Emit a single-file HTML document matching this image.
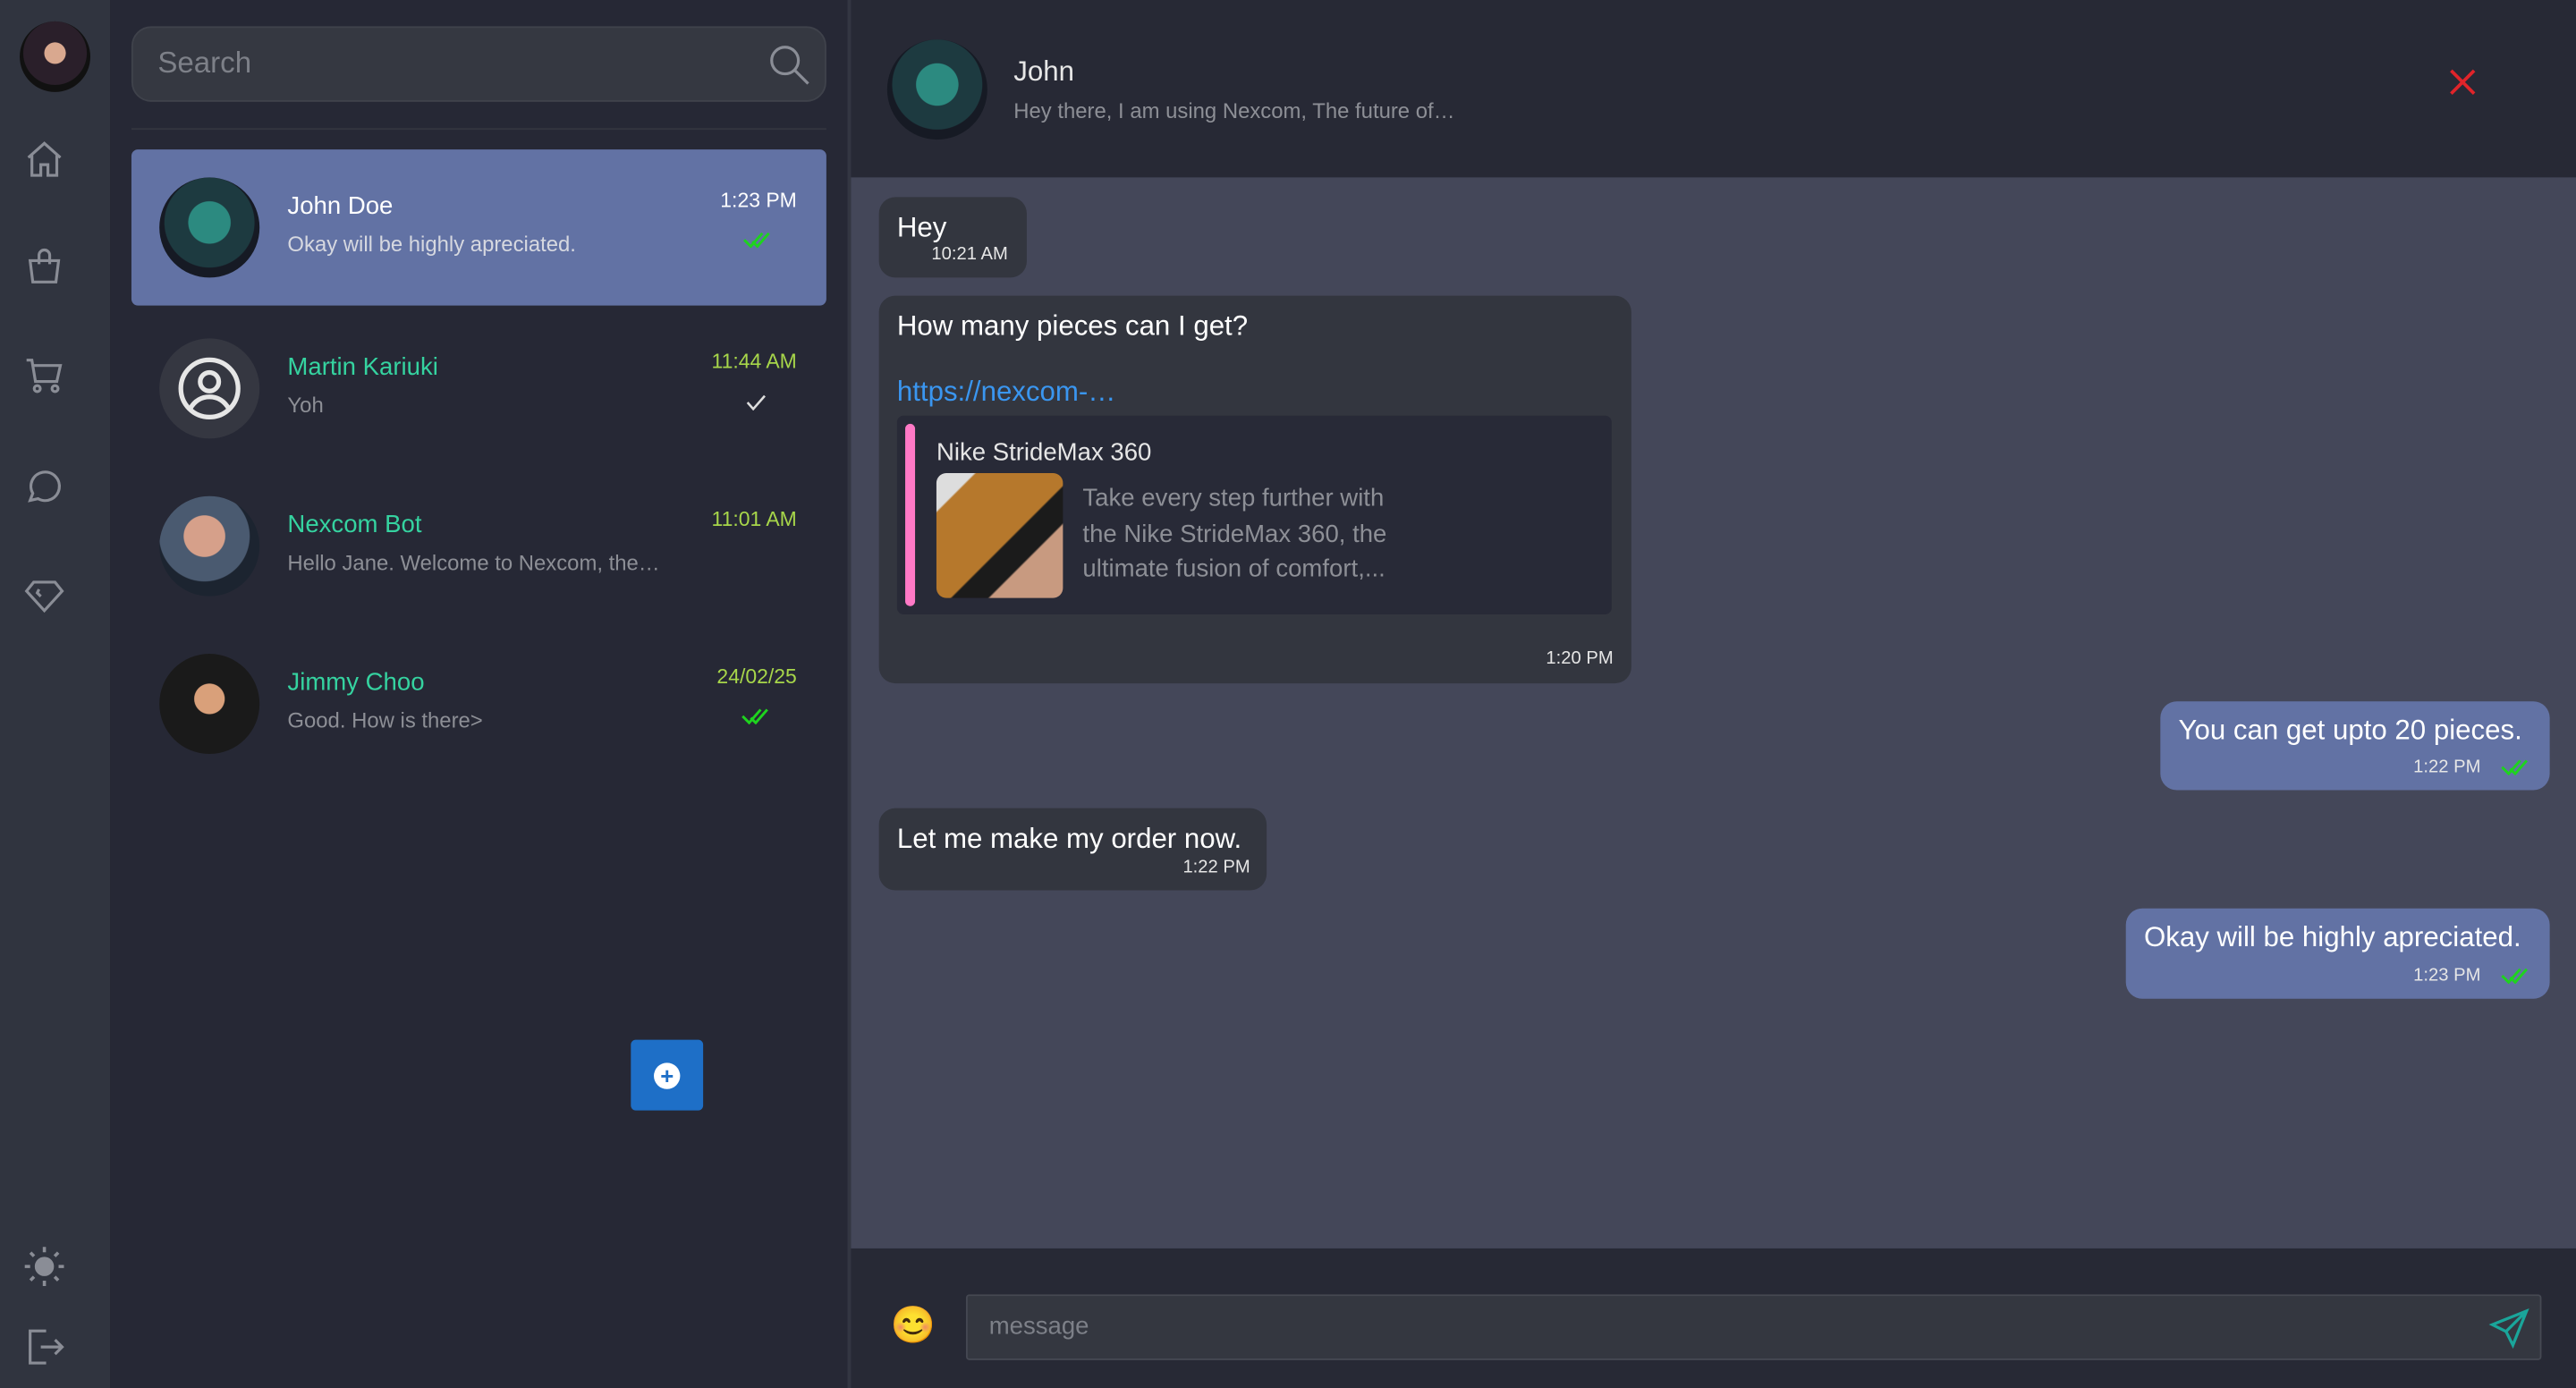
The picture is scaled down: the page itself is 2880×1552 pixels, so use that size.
<!DOCTYPE html>
<html><head><meta charset="utf-8"><style>
*{box-sizing:border-box;margin:0;padding:0}
html,body{width:2880px;height:1552px;overflow:hidden;background:#262835;font-family:"Liberation Sans",sans-serif}
#w{width:1568px;height:845px;transform:scale(1.836735);transform-origin:0 0;position:relative}
.abs{position:absolute}
.side{left:0;top:0;width:67px;height:845px;background:#30343f}
.list{left:67px;top:0;width:449px;height:845px;background:#262835}
.chat{left:516px;top:0;width:1052px;height:845px;background:#444759;border-left:2px solid #333642}
.ic{position:absolute;left:14px;width:26px;height:26px}
.av{position:absolute;border-radius:50%;overflow:hidden}
.item{position:absolute;left:80px;width:423px;height:95px;border-radius:4px}
.name{position:absolute;left:95px;font-size:15px}
.msg{position:absolute;left:95px;font-size:13px;color:#8d8f96}
.tm{position:absolute;right:18px;font-size:12.5px}
.b{position:absolute;background:#33363f;border-radius:10px;color:#fff}
.bo{position:absolute;background:#6272a4;border-radius:10px;color:#fff}
.st{font-size:11px;color:#e6e6e6}
.ck{position:absolute;width:17px;height:10px}
</style></head><body><div id="w">
<div class="abs side">
 <div class="av" style="left:12px;top:13px;width:43px;height:43px;background:radial-gradient(circle at 50% 45%,#d9a88f 0 20%,#2a1f2a 21% 60%,#111 61%)"></div>
 <svg class="ic" style="top:84px" viewBox="0 0 24 24" fill="none" stroke="#8a8d96" stroke-width="1.6"><path d="M3 11L12 3l9 8M5 9.5V21h5v-6h4v6h5V9.5"/></svg>
 <svg class="ic" style="top:150px" viewBox="0 0 24 24" fill="none" stroke="#8a8d96" stroke-width="1.6"><path d="M4 8h16l-1.5 12h-13z"/><path d="M9 10V5a3 3 0 016 0v5"/></svg>
 <svg class="ic" style="top:216px" viewBox="0 0 24 24" fill="none" stroke="#8a8d96" stroke-width="1.6"><path d="M2 3h3l2 12h12l2-9H6"/><circle cx="8" cy="19" r="1.7"/><circle cx="18" cy="19" r="1.7"/></svg>
 <svg class="ic" style="top:283px" viewBox="0 0 24 24" fill="none" stroke="#8a8d96" stroke-width="1.6"><path d="M4 20l1.5-4A8 8 0 1 1 8.5 19z"/></svg>
 <svg class="ic" style="top:349px" viewBox="0 0 24 24" fill="none" stroke="#8a8d96" stroke-width="1.6"><path d="M6 5h12l4 5-10 11L2 10z"/><path d="M9 9l-1 2 2 2"/></svg>
 <svg class="ic" style="top:758px" viewBox="0 0 24 24" fill="#8a8d96" stroke="#8a8d96" stroke-width="1.8"><circle cx="12" cy="12" r="4.5"/><path d="M12 1v3M12 20v3M1 12h3M20 12h3M4.2 4.2l2 2M17.8 17.8l2 2M4.2 19.8l2-2M17.8 6.2l2-2"/></svg>
 <svg class="ic" style="top:807px" viewBox="0 0 24 24" fill="none" stroke="#8a8d96" stroke-width="1.6"><path d="M13 3H4v18h9M10 12h12M18 8l4 4-4 4"/></svg>
</div>
<div class="abs list">
 <div class="abs" style="left:13px;top:16px;width:423px;height:46px;border:1px solid #3f424b;border-radius:12px;background:#353841"></div>
 <div class="abs" style="left:29px;top:28px;font-size:18px;color:#7d8088">Search</div>
 <svg class="abs" style="left:400px;top:26px;width:26px;height:26px" viewBox="0 0 24 24" fill="none" stroke="#8a8d96" stroke-width="1.6"><circle cx="10" cy="10" r="7.5"/><path d="M15.5 15.5L23 23"/></svg>
 <div class="abs" style="left:13px;top:78px;width:423px;height:1px;background:#34363f"></div>
</div>
<div class="item" style="top:91px;background:#6272a4">
 <div class="av" style="left:17px;top:17px;width:61px;height:61px;background:radial-gradient(circle at 50% 45%,#2c8a80 0 28%,#1d3a40 29% 60%,#161a24 61%)"></div>
 <div class="name" style="top:26px;color:#fff">John Doe</div>
 <div class="msg" style="top:50px;color:#d6d8e0">Okay will be highly apreciated.</div>
 <div class="tm" style="top:24px;color:#fff">1:23 PM</div>
 <svg class="ck" style="left:372px;top:50px" viewBox="0 0 17 10" fill="none" stroke="#1ed31e" stroke-width="1.6"><path d="M1 5l4 4 7-8M6 6l3 3 7-8"/></svg>
</div>
<div class="item" style="top:189px">
 <div class="av" style="left:17px;top:17px;width:61px;height:61px;background:#353741"></div>
 <svg class="abs" style="left:27px;top:27px;width:41px;height:41px" viewBox="0 0 40 40" fill="none" stroke="#e6e6e6" stroke-width="2.8"><circle cx="20" cy="20" r="17"/><circle cx="20" cy="16" r="5.5"/><path d="M8.5 32c3-5 7-7 11.5-7s8.5 2 11.5 7"/></svg>
 <div class="name" style="top:26px;color:#35d3a0">Martin Kariuki</div>
 <div class="msg" style="top:50px">Yoh</div>
 <div class="tm" style="top:24px;color:#a7d64a">11:44 AM</div>
 <svg class="ck" style="left:373px;top:51px" viewBox="0 0 17 10" fill="none" stroke="#ddd" stroke-width="1.4"><path d="M2 5l3.5 4 7-8"/></svg>
</div>
<div class="item" style="top:285px">
 <div class="av" style="left:17px;top:17px;width:61px;height:61px;background:radial-gradient(circle at 45% 40%,#d6a08a 0 25%,#4a5a70 26% 55%,#1c2430 56%)"></div>
 <div class="name" style="top:26px;color:#35d3a0">Nexcom Bot</div>
 <div class="msg" style="top:50px">Hello Jane. Welcome to Nexcom, the…</div>
 <div class="tm" style="top:24px;color:#a7d64a">11:01 AM</div>
</div>
<div class="item" style="top:381px">
 <div class="av" style="left:17px;top:17px;width:61px;height:61px;background:radial-gradient(circle at 50% 45%,#d9a07a 0 20%,#1a1a1a 21%)"></div>
 <div class="name" style="top:26px;color:#35d3a0">Jimmy Choo</div>
 <div class="msg" style="top:50px">Good. How is there&gt;</div>
 <div class="tm" style="top:24px;color:#a7d64a">24/02/25</div>
 <svg class="ck" style="left:371px;top:50px" viewBox="0 0 17 10" fill="none" stroke="#1ed31e" stroke-width="1.6"><path d="M1 5l4 4 7-8M6 6l3 3 7-8"/></svg>
</div>
<div class="abs" style="left:384px;top:633px;width:44px;height:43px;background:#1e6fc7;border-radius:3px"></div>
<div class="abs" style="left:398px;top:647px;width:16px;height:16px;border-radius:50%;background:#fff;color:#1e6fc7;font-size:14px;line-height:16px;text-align:center;font-weight:bold">+</div>
<div class="abs chat">
 <div class="abs" style="left:0;top:0;width:1052px;height:108px;background:#272935"></div>
 <div class="av" style="left:22px;top:24px;width:61px;height:61px;background:radial-gradient(circle at 50% 45%,#2c8a80 0 28%,#1d3a40 29% 60%,#161a24 61%)"></div>
 <div class="abs" style="left:99px;top:34px;font-size:17px;color:#e6e6e6">John</div>
 <div class="abs" style="left:99px;top:60px;font-size:13px;color:#8d8f96">Hey there, I am using Nexcom, The future of…</div>
 <svg class="abs" style="left:972px;top:41px;width:18px;height:18px" viewBox="0 0 18 18" stroke="#e0242a" stroke-width="2"><path d="M2 2l14 14M16 2L2 16"/></svg>
 <div class="b" style="left:17px;top:120px;width:90px;height:49px"><div style="position:absolute;left:11px;top:9px;font-size:17px">Hey</div><div class="st" style="position:absolute;left:32px;top:29px">10:21 AM</div></div>
 <div class="b" style="left:17px;top:180px;width:458px;height:236px">
  <div style="position:absolute;left:11px;top:9px;font-size:17px">How many pieces can I get?</div>
  <div style="position:absolute;left:11px;top:49px;font-size:17px;color:#3a96f0">https://nexcom-…</div>
  <div style="position:absolute;left:11px;top:73px;width:435px;height:121px;background:#282a37;border-radius:4px">
   <div style="position:absolute;left:5px;top:5px;width:6px;height:111px;background:#ff79c6;border-radius:3px"></div>
   <div style="position:absolute;left:24px;top:14px;font-size:15px;color:#e6e6e6">Nike StrideMax 360</div>
   <div style="position:absolute;left:24px;top:35px;width:77px;height:76px;border-radius:6px;background:linear-gradient(135deg,#ddd 0 15%,#b6782c 16% 55%,#1b1b1b 56% 70%,#c89a80 71%)"></div>
   <div style="position:absolute;left:113px;top:40px;font-size:15px;line-height:21.7px;color:#8d8f96">Take every step further with<br>the Nike StrideMax 360, the<br>ultimate fusion of comfort,...</div>
  </div>
  <div class="st" style="position:absolute;right:11px;top:215px">1:20 PM</div>
 </div>
 <div class="bo" style="left:797px;top:427px;width:237px;height:54px"><div style="position:absolute;left:11px;top:8px;font-size:17px">You can get upto 20 pieces.</div><div class="st" style="position:absolute;left:154px;top:34px">1:22 PM</div><svg class="ck" style="left:207px;top:35px" viewBox="0 0 17 10" fill="none" stroke="#1ed31e" stroke-width="1.6"><path d="M1 5l4 4 7-8M6 6l3 3 7-8"/></svg></div>
 <div class="b" style="left:17px;top:492px;width:236px;height:50px"><div style="position:absolute;left:11px;top:9px;font-size:17px">Let me make my order now.</div><div class="st" style="position:absolute;left:185px;top:30px">1:22 PM</div></div>
 <div class="bo" style="left:776px;top:553px;width:258px;height:55px"><div style="position:absolute;left:11px;top:8px;font-size:17px">Okay will be highly apreciated.</div><div class="st" style="position:absolute;left:175px;top:35px">1:23 PM</div><svg class="ck" style="left:228px;top:36px" viewBox="0 0 17 10" fill="none" stroke="#1ed31e" stroke-width="1.6"><path d="M1 5l4 4 7-8M6 6l3 3 7-8"/></svg></div>
 <div class="abs" style="left:0;top:760px;width:1052px;height:85px;background:#272935"></div>
 <div class="abs" style="left:24px;top:794px;font-size:22px">😊</div>
 <div class="abs" style="left:70px;top:788px;width:959px;height:40px;background:#343740;border:1px solid #454852;border-radius:2px"></div>
 <div class="abs" style="left:84px;top:799px;font-size:15px;color:#7d8088">message</div>
 <svg class="abs" style="left:997px;top:796px;width:25px;height:25px" viewBox="0 0 24 24" fill="none" stroke="#1aa59a" stroke-width="1.7"><path d="M22 2L2 10l8 4 4 8zM22 2L10 14"/></svg>
</div>
</div></body></html>
